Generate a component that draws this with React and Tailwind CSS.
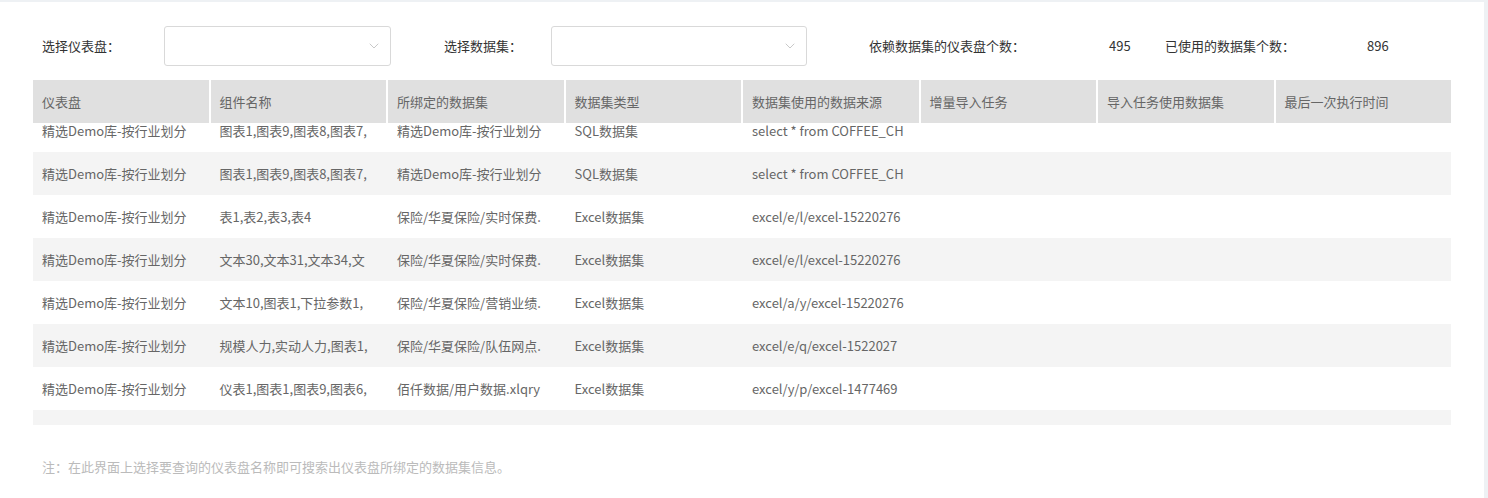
import { ChevronDown } from "lucide-react";

const cols = ["仪表盘", "组件名称", "所绑定的数据集", "数据集类型", "数据集使用的数据来源", "增量导入任务", "导入任务使用数据集", "最后一次执行时间"];

const rows = [
  ["精选Demo库-按行业划分", "图表1,图表9,图表8,图表7,", "精选Demo库-按行业划分", "SQL数据集", "select * from COFFEE_CH"],
  ["精选Demo库-按行业划分", "图表1,图表9,图表8,图表7,", "精选Demo库-按行业划分", "SQL数据集", "select * from COFFEE_CH"],
  ["精选Demo库-按行业划分", "表1,表2,表3,表4", "保险/华夏保险/实时保费.", "Excel数据集", "excel/e/l/excel-15220276"],
  ["精选Demo库-按行业划分", "文本30,文本31,文本34,文", "保险/华夏保险/实时保费.", "Excel数据集", "excel/e/l/excel-15220276"],
  ["精选Demo库-按行业划分", "文本10,图表1,下拉参数1,", "保险/华夏保险/营销业绩.", "Excel数据集", "excel/a/y/excel-15220276"],
  ["精选Demo库-按行业划分", "规模人力,实动人力,图表1,", "保险/华夏保险/队伍网点.", "Excel数据集", "excel/e/q/excel-1522027"],
  ["精选Demo库-按行业划分", "仪表1,图表1,图表9,图表6,", "佰仟数据/用户数据.xlqry", "Excel数据集", "excel/y/p/excel-1477469"],
  ["", "", "", "", ""],
];

function Select({ w }) {
  return (
    <div className={`${w} h-[40px] border border-[#d9d9d9] rounded-[3px] bg-white flex items-center justify-end pr-[8px]`}>
      <ChevronDown size={16} strokeWidth={1.2} className="text-[#bbb]" />
    </div>
  );
}

export default function App() {
  return (
    <div className="w-[1488px] h-[498px] bg-[#eef1f4] pt-[2px] pr-[4px] overflow-hidden" style={{ fontFamily: '"Noto Sans CJK SC", "Noto Sans", sans-serif' }}>
      <div className="bg-white h-full pt-[24px] text-[13px] text-[#666]">
        <div className="flex items-center h-[40px] text-[#333]">
          <span className="ml-[42px] w-[122px]">选择仪表盘：</span>
          <Select w="w-[227px]" />
          <span className="ml-[53px] w-[107px]">选择数据集：</span>
          <Select w="w-[256px]" />
          <span className="ml-[62px] w-[240px]">依赖数据集的仪表盘个数：</span>
          <span className="w-[56px]">495</span>
          <span className="w-[202px]">已使用的数据集个数：</span>
          <span>896</span>
        </div>
        <div className="ml-[33px] w-[1418px] mt-[14px]">
          <div className="grid grid-cols-8 gap-x-[2px] bg-white">
            {cols.map((c) => (
              <div key={c} className="h-[43px] bg-[#e0e0e0] flex items-center px-[9px] text-[#666]">{c}</div>
            ))}
          </div>
          <div className="h-[302px] overflow-hidden">
            <div className="-mt-[14px]">
              {rows.map((r, i) => (
                <div key={i} className={`grid grid-cols-8 gap-x-[2px] h-[43px] ${i % 2 ? "bg-[#f4f4f4]" : "bg-white"}`}>
                  {[...r, "", "", ""].map((v, j) => (
                    <div key={j} className="flex items-center px-[9px] whitespace-nowrap overflow-hidden">{v}</div>
                  ))}
                </div>
              ))}
            </div>
          </div>
        </div>
        <div className="ml-[42px] mt-[32px] text-[#bbb]">注：在此界面上选择要查询的仪表盘名称即可搜索出仪表盘所绑定的数据集信息。</div>
      </div>
    </div>
  );
}
